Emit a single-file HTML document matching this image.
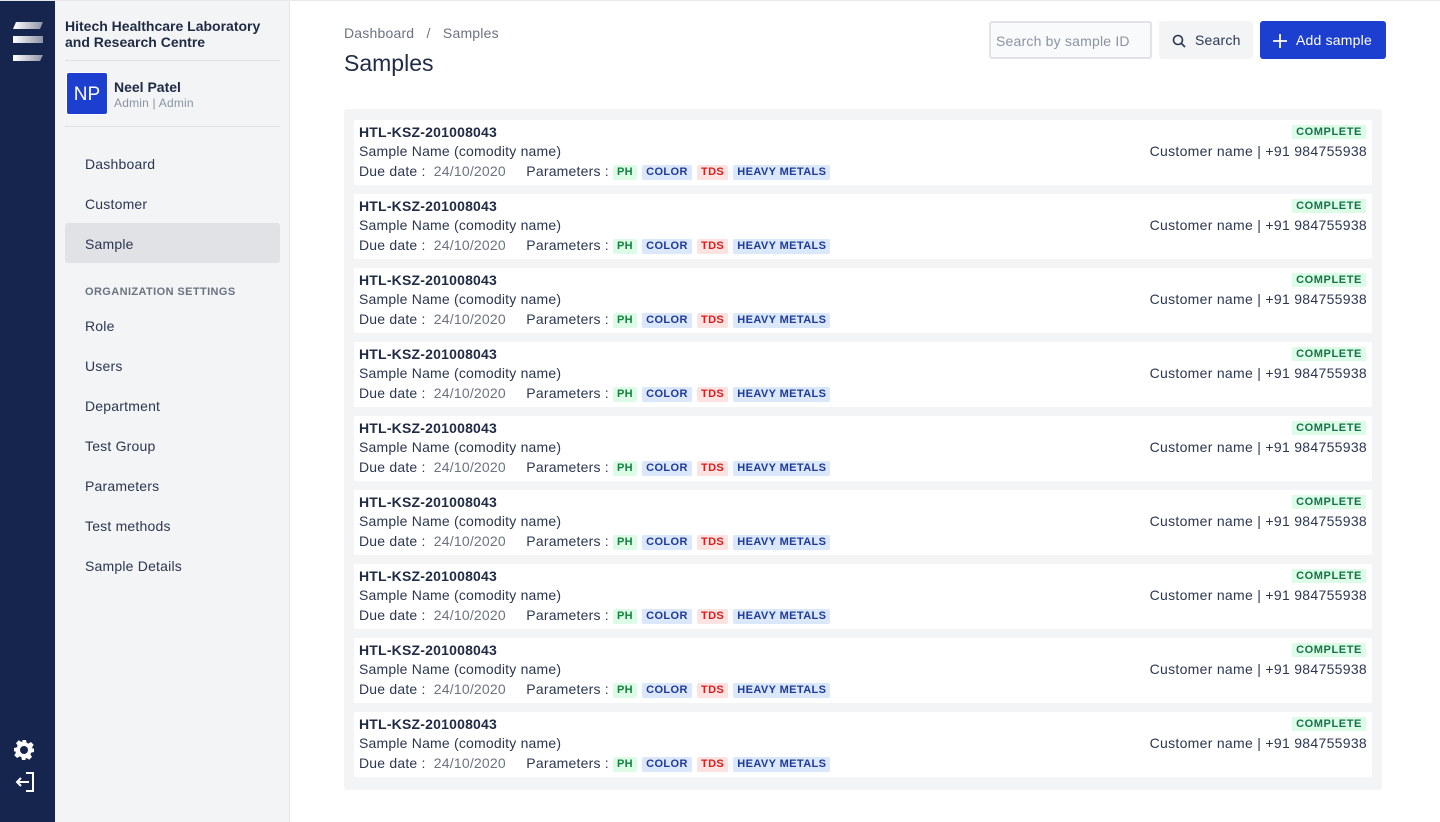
<!DOCTYPE html><html><head><style>
*{box-sizing:border-box;margin:0;padding:0}
body{width:1440px;height:822px;overflow:hidden;font-family:"Liberation Sans",sans-serif;background:#fff;color:#1f2a44;position:relative}
.topl{position:absolute;left:0;top:0;width:1440px;height:1px;background:#e5e7eb;z-index:5}
.rail{position:absolute;left:0;top:0;width:55px;height:822px;background:#16254d}
.side{position:absolute;left:55px;top:0;width:235px;height:822px;background:#f3f4f6;border-right:1px solid #e3e5e8}
.org{position:absolute;left:10px;top:18px;width:215px;font-weight:bold;font-size:14px;line-height:16px;color:#1f2a44;border-bottom:1px solid #dfe1e5;padding-bottom:10px}
.user{position:absolute;left:10px;top:61px;width:215px;height:66px;border-bottom:1px solid #dfe1e5}
.av{position:absolute;left:1px;top:11px;width:42px;height:43px;background:#1d3fcf;border-radius:3px;color:#fff;font-size:19px;line-height:43px;text-align:center;border:1px solid #fff}
.un{position:absolute;left:49px;top:18px;font-size:14px;font-weight:bold}
.ur{position:absolute;left:49px;top:35px;font-size:12px;color:#8a93a3;letter-spacing:.2px}
.nav{position:absolute;left:10px;width:215px;height:40px;line-height:42px;padding-left:20px;font-size:14px;color:#2b3650;border-radius:3px;letter-spacing:.2px}
.nav.act{background:#e1e2e6}
.sec{position:absolute;left:30px;top:286px;font-size:11px;font-weight:bold;color:#6b7280;letter-spacing:.4px}
.bc{position:absolute;left:344px;top:25px;font-size:14px;color:#6b7280;letter-spacing:.2px}
h1{position:absolute;left:344px;top:50px;font-size:23px;font-weight:normal;color:#1f2a44}
.inp{position:absolute;left:989px;top:21px;width:163px;height:38px;border:2px solid #e1e3e8;border-radius:3px;background:#f9fafb;font-size:14px;color:#8a93a3;padding:10px 0 0 5px;letter-spacing:.2px}
.sb{position:absolute;left:1159px;top:21px;width:94px;height:38px;background:#f3f4f6;border-radius:3px;font-size:14px;color:#2b3650;line-height:39px;padding-left:36px;letter-spacing:.2px}
.ab{position:absolute;left:1260px;top:21px;width:126px;height:38px;background:#1d3fcf;border-radius:3px;font-size:14px;color:#fff;line-height:39px;padding-left:36px;letter-spacing:.2px}
.box{position:absolute;left:344px;top:109px;width:1038px;height:681px;background:#f3f4f6;border-radius:3px}
.row{position:absolute;left:10px;width:1018px;height:65px;background:#fff;border-radius:2px;letter-spacing:.2px}
.id{position:absolute;left:5px;top:4px;font-size:14px;font-weight:bold}
.nm{position:absolute;left:5px;top:23px;font-size:14px;color:#2b3650}
.dd{position:absolute;left:5px;top:43px;font-size:14px;color:#2b3650;white-space:nowrap}
.dd .g{color:#6b7280}
.t{display:inline-block;font-size:11px;font-weight:bold;padding:0 4px;line-height:15px;border-radius:2px;margin-right:1px;letter-spacing:.4px;vertical-align:1px}
.ph{background:#dcfce7;color:#15803d}.co{background:#dbe7fb;color:#1e3a9a}.td{background:#fde2e2;color:#dc1c1c}
.cp{position:absolute;right:6px;top:5px;background:#dcfce7;color:#157347;font-size:11px;font-weight:bold;padding:0 4px;line-height:14px;letter-spacing:.6px}
.cn{position:absolute;right:5px;top:23px;font-size:14px;color:#2b3650;letter-spacing:.3px}
</style></head><body>
<div class="topl"></div>
<div class="rail">
<svg width="55" height="70" style="position:absolute;left:0;top:0"><defs><linearGradient id="g" x1="0" x2="1"><stop offset="0" stop-color="#fff"/><stop offset="1" stop-color="#8c93a6"/></linearGradient></defs>
<path d="M16 22h27l-3 7H13z" fill="url(#g)"/><path d="M13 36h30v7H13z" fill="url(#g)"/><path d="M13 55h30l-3 6H13z" fill="url(#g)"/></svg>
<svg width="24" height="24" viewBox="0 0 24 24" style="position:absolute;left:12px;top:738px"><path fill="#fff" fill-rule="evenodd" d="M10 2h4l.6 2.8 1.9.8 2.4-1.6 2.8 2.8-1.6 2.4.8 1.9L22 10v4l-2.8.6-.8 1.9 1.6 2.4-2.8 2.8-2.4-1.6-1.9.8L14 22h-4l-.6-2.8-1.9-.8-2.4 1.6-2.8-2.8 1.6-2.4-.8-1.9L2 14v-4l2.8-.6.8-1.9L4 5.1 6.8 2.3l2.4 1.6 1.9-.8zM12 8a4 4 0 100 8 4 4 0 000-8z"/></svg>
<svg width="24" height="24" viewBox="0 0 24 24" style="position:absolute;left:13px;top:770px" fill="none" stroke="#fff" stroke-width="2"><path d="M13 3h7v18h-7M16 12H4M8 8l-4 4 4 4"/></svg>
</div>
<div class="side">
<div class="org">Hitech Healthcare Laboratory and Research Centre</div>
<div class="user"><div class="av">NP</div><div class="un">Neel Patel</div><div class="ur">Admin | Admin</div></div>
<div class="nav" style="top:143px">Dashboard</div>
<div class="nav" style="top:183px">Customer</div>
<div class="nav act" style="top:223px">Sample</div>
<div class="sec">ORGANIZATION SETTINGS</div>
<div class="nav" style="top:305px">Role</div>
<div class="nav" style="top:345px">Users</div>
<div class="nav" style="top:385px">Department</div>
<div class="nav" style="top:425px">Test Group</div>
<div class="nav" style="top:465px">Parameters</div>
<div class="nav" style="top:505px">Test methods</div>
<div class="nav" style="top:545px">Sample Details</div>
</div>
<div class="bc">Dashboard &nbsp; / &nbsp; Samples</div>
<h1>Samples</h1>
<div class="inp">Search by sample ID</div>
<div class="sb"><svg width="14" height="14" viewBox="0 0 14 14" style="position:absolute;left:13px;top:13px" fill="none" stroke="#2b3650" stroke-width="1.6"><circle cx="6" cy="6" r="4.5"/><path d="M9.5 9.5l3.5 3.5"/></svg>Search</div>
<div class="ab"><svg width="14" height="14" style="position:absolute;left:13px;top:13px" stroke="#fff" stroke-width="1.8"><path d="M7 0v14M0 7h14"/></svg>Add sample</div>
<div class="box">
<script>
for(let i=0;i<9;i++){document.write('<div class="row" style="top:'+(11+i*74)+'px"><div class="id">HTL-KSZ-201008043</div><div class="nm">Sample Name (comodity name)</div><div class="dd">Due date : &nbsp;<span class="g">24/10/2020</span> &nbsp;&nbsp;&nbsp; Parameters : <span class="t ph">PH</span> <span class="t co">COLOR</span> <span class="t td">TDS</span> <span class="t co">HEAVY METALS</span></div><div class="cp">COMPLETE</div><div class="cn">Customer name | +91 984755938</div></div>')}
</script>
</div>
</body></html>
